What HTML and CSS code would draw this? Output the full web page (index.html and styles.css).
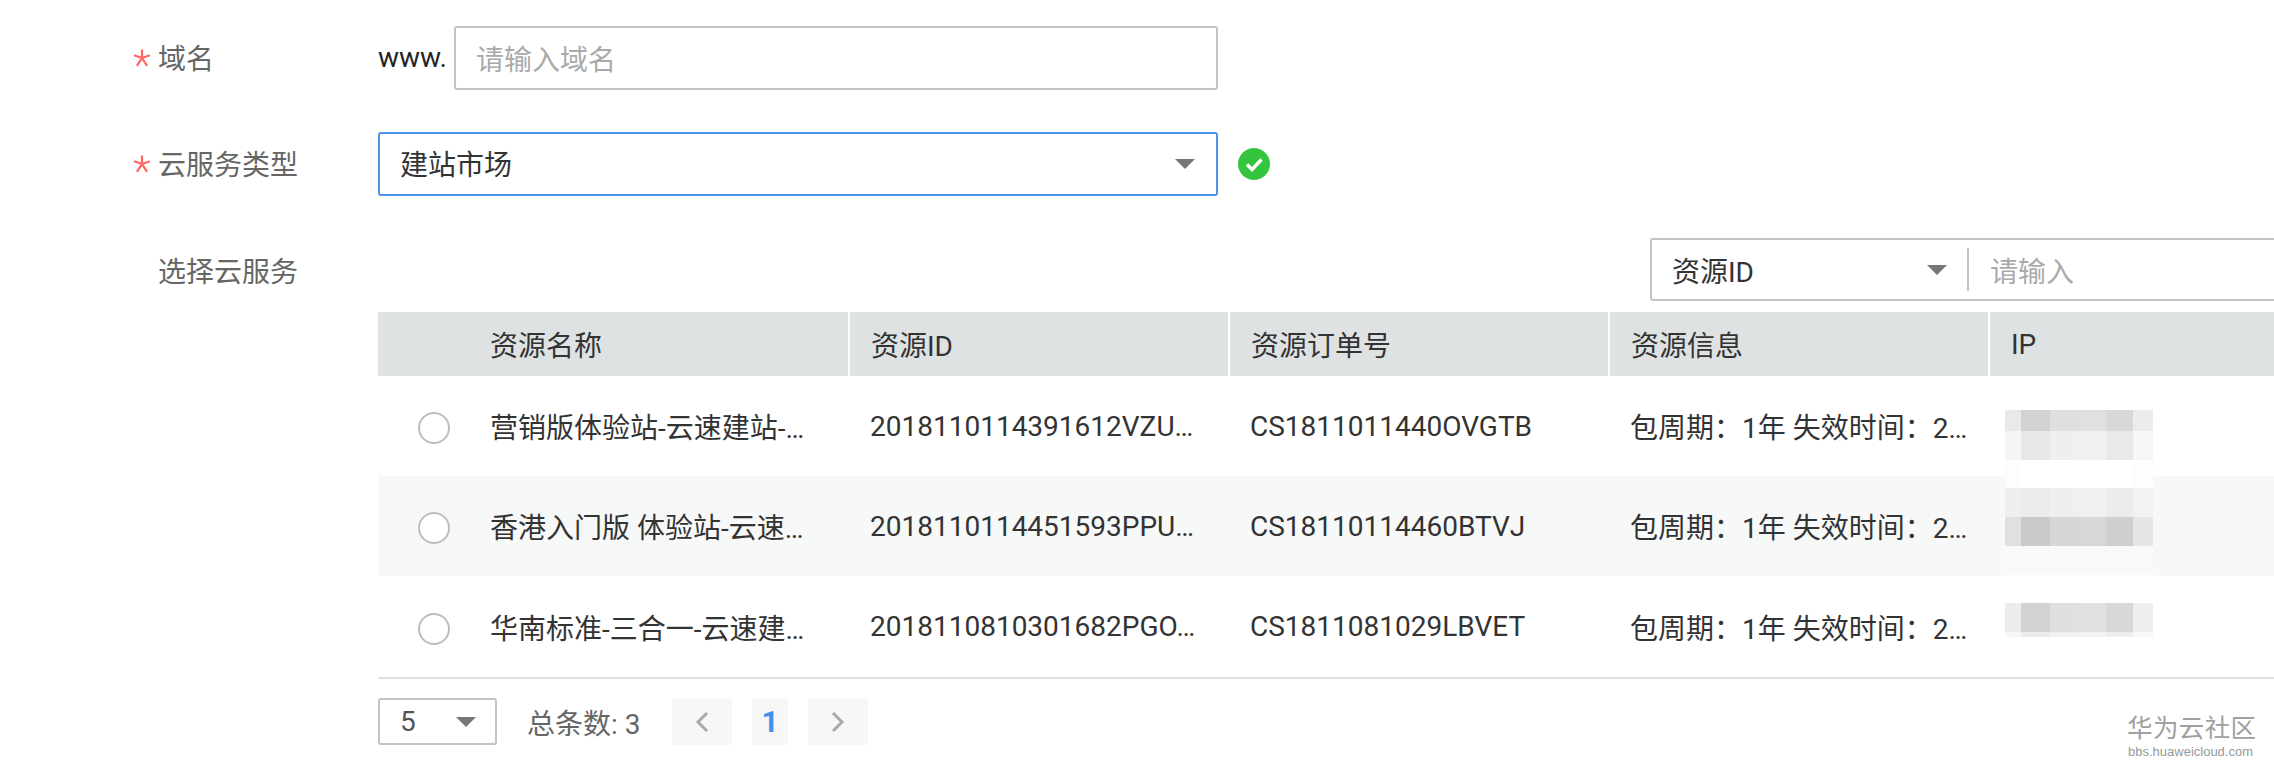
FILE: index.html
```html
<!DOCTYPE html>
<html lang="zh-CN">
<head>
<meta charset="utf-8">
<title>选择云服务</title>
<link rel="stylesheet" href="styles.css">
</head>
<body>
<main class="form">
  <div class="row">
    <div class="label"><svg class="star" viewBox="0 0 16 16"><path d="M8 0.5V8M8 8L1 5.5M8 8L15 5.5M8 8L3.5 15M8 8L12.5 15"/></svg>域名</div>
    <div class="control">
      <span class="prefix">www.</span>
      <div class="field domain placeholder">请输入域名</div>
    </div>
  </div>
  <div class="row">
    <div class="label"><svg class="star" viewBox="0 0 16 16"><path d="M8 0.5V8M8 8L1 5.5M8 8L15 5.5M8 8L3.5 15M8 8L12.5 15"/></svg>云服务类型</div>
    <div class="control">
      <div class="field select focused"><span class="select-text">建站市场</span><i class="caret"></i></div>
      <svg class="ok" viewBox="0 0 32 32"><circle cx="16" cy="16" r="16"/><path d="M9 16.5L14 21.5L23.5 11.5"/></svg>
    </div>
  </div>
  <div class="row services">
    <div class="label">选择云服务</div>
    <div class="content">
      <div class="toolbar">
        <div class="search">
          <div class="search-type"><span>资源ID</span><i class="caret"></i></div>
          <div class="search-input placeholder">请输入</div>
        </div>
      </div>
      <div class="table-wrap">
        <table class="table">
          <colgroup><col class="c-radio"><col class="c-data"><col class="c-data"><col class="c-data"><col class="c-data"><col></colgroup>
          <thead>
            <tr><th></th><th class="first">资源名称</th><th>资源ID</th><th>资源订单号</th><th>资源信息</th><th>IP</th></tr>
          </thead>
          <tbody>
            <tr>
              <td class="radio-cell"><span class="radio"></span></td>
              <td><div class="cut first">营销版体验站-云速建站-…</div></td>
              <td><div class="cut">2018110114391612VZU…</div></td>
              <td><div class="cut">CS1811011440OVGTB</div></td>
              <td><div class="cut">包周期：1年 失效时间：2…</div></td>
              <td></td>
            </tr>
            <tr class="alt">
              <td class="radio-cell"><span class="radio"></span></td>
              <td><div class="cut first">香港入门版 体验站-云速…</div></td>
              <td><div class="cut">2018110114451593PPU…</div></td>
              <td><div class="cut">CS18110114460BTVJ</div></td>
              <td><div class="cut">包周期：1年 失效时间：2…</div></td>
              <td></td>
            </tr>
            <tr class="last">
              <td class="radio-cell"><span class="radio"></span></td>
              <td><div class="cut first">华南标准-三合一-云速建…</div></td>
              <td><div class="cut">2018110810301682PGO…</div></td>
              <td><div class="cut">CS1811081029LBVET</div></td>
              <td><div class="cut">包周期：1年 失效时间：2…</div></td>
              <td></td>
            </tr>
          </tbody>
        </table>
        <div class="mosaic" aria-hidden="true">
          <div class="m a"></div><div class="m b"></div><div class="m w"></div>
          <div class="m c"></div><div class="m d"></div><div class="m e"></div>
          <div class="m gap"></div>
          <div class="m f"></div><div class="m g"></div>
        </div>
      </div>
      <div class="pager">
        <div class="field size"><span>5</span><i class="caret"></i></div>
        <span class="total">总条数: 3</span>
        <span class="page nav"><svg viewBox="0 0 14 24"><path d="M12 3L3 12L12 21"/></svg></span>
        <span class="page current">1</span>
        <span class="page nav"><svg viewBox="0 0 14 24"><path d="M2 3L11 12L2 21"/></svg></span>
      </div>
    </div>
  </div>
</main>
<div class="mark"><div class="mark-cn">华为云社区</div><div class="mark-en">bbs.huaweicloud.com</div></div>
</body>
</html>
```
FILE: styles.css
```css
* { box-sizing: border-box; }
html, body { margin: 0; height: 776px; overflow: hidden; background: #fff; }
body {
  position: relative;
  width: 2274px;
  font-family: Roboto, "Noto Sans CJK SC", sans-serif;
  font-size: 28px;
  color: #252b3a;
}
.form { display: flex; flex-direction: column; gap: 42px; padding-top: 26px; width: 2274px; }
.row { display: flex; align-items: center; height: 64px; }
.label {
  position: relative;
  flex: none;
  width: 378px;
  padding: 3px 0 0 158px;
  line-height: 64px;
  color: #666;
}
.services .label { padding-top: 3px; }
.star { position: absolute; left: 133px; top: 24px; width: 18px; height: 18px; fill: none; stroke: #f66; stroke-width: 2; }
.control { display: flex; align-items: center; }
.prefix { width: 76px; color: #252525; margin-top: -2px; }
.field {
  display: flex;
  align-items: center;
  height: 64px;
  border: 2px solid #c4c4c4;
  border-radius: 3px;
  padding: 0 20px;
  background: #fff;
}
.domain { width: 764px; }
.select { width: 840px; justify-content: space-between; color: #333; padding-right: 21px; }
.select-text { margin-top: -2px; }
.focused { border-color: #4a95e5; }
.placeholder { color: #aaa; }
.caret { flex: none; width: 0; height: 0; border-left: 10px solid transparent; border-right: 10px solid transparent; border-top: 10px solid #777; }
.ok { width: 32px; height: 32px; margin-left: 20px; }
.ok circle { fill: #35c53c; }
.ok path { fill: none; stroke: #fff; stroke-width: 3.5; }
.services { align-items: flex-start; height: auto; margin-top: 0; }
.content { flex: 1; min-width: 0; }
.toolbar { display: flex; justify-content: flex-end; height: 74px; }
.search {
  display: flex;
  align-items: center;
  flex: none;
  width: 641px;
  height: 63px;
  margin-right: -17px;
  border: 2px solid #c4c4c4;
  border-radius: 3px;
}
.search-type {
  display: flex;
  align-items: center;
  justify-content: space-between;
  flex: none;
  width: 317px;
  height: 43px;
  padding: 0 20px 0 20px;
  border-right: 2px solid #c4c4c4;
  color: #333;
}
.search-input { padding-left: 21px; }
.table-wrap { position: relative; }
.table { width: 100%; border-collapse: collapse; table-layout: fixed; }
.c-radio { width: 91px; }
.c-data { width: 380px; }
.table th {
  height: 64px;
  padding: 0 0 0 21px;
  border-left: 2px solid #fff;
  background: #dfe2e3;
  font-weight: 400;
  text-align: left;
  color: #333;
}
.table th:first-child, .table th.first { border-left: 0; }
.table td { height: 100px; padding: 0 20px 0 21px; color: #333; }
.alt td { background: #f7f8f8; }
.last td { height: 102px; border-bottom: 2px solid #dfdfdf; }
.cut { white-space: nowrap; }
.table td.radio-cell { padding: 0 0 0 40px; }
.radio { display: block; width: 32px; height: 32px; margin-top: 4px; border: 2px solid #bdbdbd; border-radius: 50%; background: #fff; }
.mosaic { position: absolute; left: 1627px; top: 98px; width: 148px; display: flex; flex-direction: column; }
.m { --c1: #fff; --c2: #fff; --c3: #fff; --c4: #fff; --c5: #fff; --c6: #fff;
  background: linear-gradient(90deg, var(--c1) 16px, var(--c2) 16px 45px, var(--c3) 45px 73px, var(--c4) 73px 101px, var(--c5) 101px 128px, var(--c6) 128px);
}
.a { height: 21px; --c1: #e9e9e9; --c2: #d2d2d2; --c3: #dfdfdf; --c4: #e0e0e0; --c5: #d8d8d8; --c6: #ececec; }
.b { height: 29px; --c1: #f5f5f5; --c2: #e8e8e8; --c3: #efefef; --c4: #f1f1f1; --c5: #e9e9e9; --c6: #f6f6f6; }
.w { height: 28px; --c1: #fdfdfd; --c6: #fdfdfd; }
.c { height: 29px; --c1: #efefef; --c2: #ebecec; --c3: #eeefef; --c4: #eff0f0; --c5: #ececec; --c6: #f2f2f2; }
.d { height: 29px; --c1: #e0e0e0; --c2: #c9caca; --c3: #d5d6d6; --c4: #d7d7d7; --c5: #cfcfcf; --c6: #e5e5e5; }
.e { height: 29px; --c1: #f8f9f9; --c2: #f8f9f9; --c3: #f8f9f9; --c4: #f8f9f9; --c5: #f8f9f9; --c6: #f8f9f9; }
.gap { height: 28px; }
.f { height: 29px; --c1: #ececec; --c2: #d2d2d2; --c3: #dfdfdf; --c4: #e1e1e1; --c5: #d8d8d8; --c6: #eeeeee; }
.g { height: 5px; --c1: #f7f7f7; --c2: #ececec; --c3: #f1f1f1; --c4: #f2f2f2; --c5: #ededed; --c6: #f8f8f8; }
.pager { display: flex; align-items: center; height: 47px; margin-top: 19px; color: #666; }
.size { width: 119px; height: 47px; justify-content: space-between; padding: 0 19px 0 20px; color: #555; }
.total { margin-left: 30px; width: 145px; }
.page {
  display: flex;
  align-items: center;
  justify-content: center;
  height: 47px;
  background: #f7f7f7;
}
.nav { width: 60px; }
.nav svg { width: 14px; height: 24px; fill: none; stroke: #aaa; stroke-width: 3; }
.current { width: 36px; margin: 0 20px; font-size: 30px; color: #3d94ea; font-weight: 700; }
.mark { position: absolute; left: 2127px; top: 713px; width: 130px; color: #999; }
.mark-cn { font-size: 25.5px; line-height: 31px; white-space: nowrap; letter-spacing: 0.4px; color: #a0a0a0; }
.mark-en { padding-left: 1px; font-family: "Liberation Sans", sans-serif; font-size: 13px; line-height: 15px; white-space: nowrap; }
```
